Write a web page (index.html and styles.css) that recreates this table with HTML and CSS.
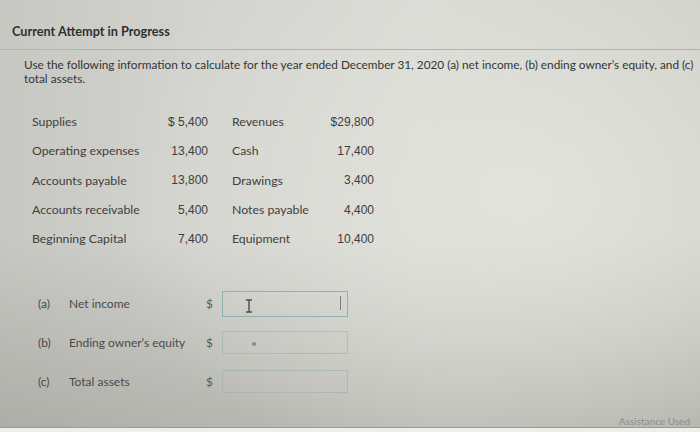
FILE: index.html
```html
<!DOCTYPE html>
<html>
<head>
<meta charset="utf-8">
<link rel="stylesheet" href="styles.css">
</head>
<body>
<div class="screen">
  <header class="head">
    <h1 class="title">Current Attempt in Progress</h1>
  </header>
  <p class="question">Use the following information to calculate for the year ended December 31, 2020 (a) net income, (b) ending owner’s equity, and (c) total assets.</p>

  <div class="data">
    <span class="lbl">Supplies</span><span class="num">$ 5,400</span><span class="lbl2">Revenues</span><span class="num">$29,800</span>
    <span class="lbl">Operating expenses</span><span class="num">13,400</span><span class="lbl2">Cash</span><span class="num">17,400</span>
    <span class="lbl">Accounts payable</span><span class="num">13,800</span><span class="lbl2">Drawings</span><span class="num">3,400</span>
    <span class="lbl">Accounts receivable</span><span class="num">5,400</span><span class="lbl2">Notes payable</span><span class="num">4,400</span>
    <span class="lbl">Beginning Capital</span><span class="num">7,400</span><span class="lbl2">Equipment</span><span class="num">10,400</span>
  </div>

  <div class="answers">
    <div class="arow">
      <span class="key">(a)</span><span class="alabel">Net income</span><span class="dollar">$</span>
      <div class="box focus">
        <svg class="ibeam" width="8" height="14" viewBox="0 0 8 14"><path d="M1 1h6M4 1v12M1 13h6" stroke="#4a4e50" stroke-width="1.4" fill="none"/></svg>
        <span class="caret"></span>
      </div>
    </div>
    <div class="arow">
      <span class="key">(b)</span><span class="alabel">Ending owner’s equity</span><span class="dollar">$</span>
      <div class="box"><span class="dot"></span></div>
    </div>
    <div class="arow">
      <span class="key">(c)</span><span class="alabel">Total assets</span><span class="dollar">$</span>
      <div class="box"></div>
    </div>
  </div>

  <footer class="foot">
    <span class="assist">Assistance Used</span>
  </footer>
</div>
</body>
</html>
```
FILE: styles.css
```css
html, body {
  margin: 0;
  padding: 0;
}
body {
  width: 700px;
  height: 432px;
  overflow: hidden;
  font-family: Lato, "Open Sans", sans-serif;
  color: #3a3b3b;
}
.screen {
  width: 700px;
  height: 432px;
  display: flex;
  flex-direction: column;
  background:
    radial-gradient(ellipse 420px 300px at 75% 45%, rgba(228,229,222,0.85), rgba(228,229,222,0) 100%),
    linear-gradient(180deg, rgba(0,0,0,0) 55%, rgba(110,108,100,0.3) 100%),
    linear-gradient(90deg, #c8c8c3 0%, #d3d3cf 30%, #d8d9d3 60%, #cfd0c8 100%);
}
.head {
  height: 50px;
  box-sizing: border-box;
  border-bottom: 1px solid #b3b3ae;
  padding: 23px 0 0 12px;
}
.title {
  margin: 0;
  font-size: 12.7px;
  font-weight: 700;
  line-height: 17px;
  color: #2f3030;
}
.question {
  margin: 8px 0 0 24px;
  width: 674px;
  font-size: 11.8px;
  line-height: 14px;
  color: #333535;
}
.data {
  margin: 21px 0 0 32px;
  display: grid;
  grid-template-columns: 120px 56px 110px 56px;
  grid-auto-rows: 29.3px;
  font-size: 12.3px;
  align-items: center;
  white-space: nowrap;
}
.lbl2 {
  padding-left: 24px;
  color: #3f4040;
}
.lbl {
  color: #3f4040;
}
.num {
  text-align: right;
  font-family: "Liberation Sans", Arial, sans-serif;
  font-size: 12px;
  color: #3c3d3d;
}
.answers {
  margin-top: 38px;
  display: flex;
  flex-direction: column;
  gap: 14px;
  padding-left: 38px;
}
.arow {
  display: flex;
  align-items: center;
  height: 25px;
  font-size: 12px;
  color: #484a4a;
}
.key {
  width: 31px;
}
.alabel {
  width: 137px;
  white-space: nowrap;
}
.dollar {
  width: 16px;
  color: #555a5a;
}
.box {
  width: 126px;
  height: 23px;
  box-sizing: border-box;
  border: 1px solid rgba(150,175,172,0.55);
  position: relative;
}
.box.focus {
  height: 26px;
  border: 1.5px solid #8fb2b0;
}
.ibeam {
  position: absolute;
  left: 22px;
  top: 7px;
}
.caret {
  position: absolute;
  right: 6px;
  top: 4px;
  width: 1px;
  height: 14px;
  background: #7a7e80;
}
.dot {
  position: absolute;
  left: 29px;
  top: 10px;
  width: 4px;
  height: 4px;
  border-radius: 50%;
  background: #8a8c88;
}
.foot {
  margin-top: auto;
  height: 16px;
  position: relative;
  background: linear-gradient(180deg, rgba(0,0,0,0) 0 11px, #9a9a95 11px 12px, #eeeeec 12px);
}
.assist {
  position: absolute;
  right: 10px;
  top: 0;
  font-size: 10px;
  color: #8a8c8c;
  line-height: 11px;
}
```
